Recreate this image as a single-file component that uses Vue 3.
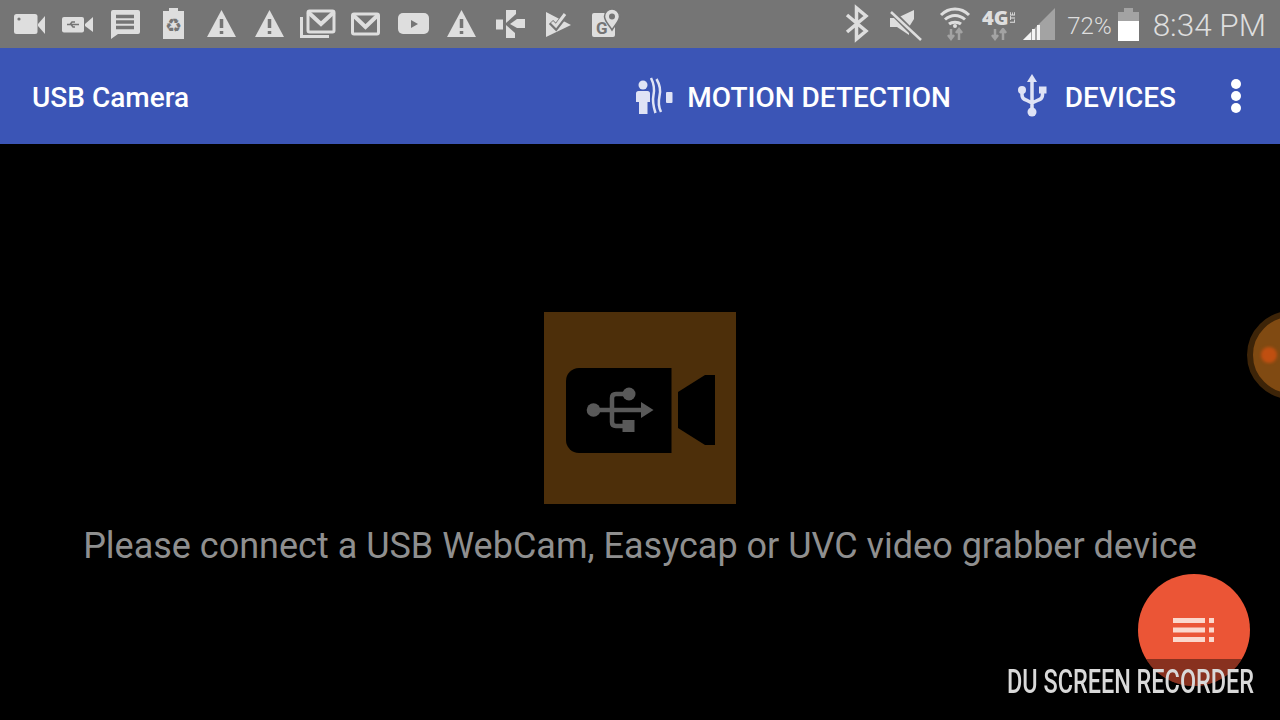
<script setup>
const warnAt = (x) => `${x - 14.5},37 ${x},10 ${x + 14.5},37`
</script>

<template>
  <div class="screen">
    <header class="status">
      <div class="tray">
        <svg class="slot" viewBox="6 0 48 48">
          <rect x="14" y="14" width="23.5" height="20" rx="2.5" />
          <circle cx="19" cy="19" r="1.6" class="cut" />
          <path d="M38 24 45 16V34L38 26Z" />
        </svg>
        <svg class="slot" viewBox="54 0 48 48">
          <rect x="62" y="17" width="22" height="15.5" rx="2" />
          <path d="M85 24 93 17V32L85 26Z" />
          <path class="line thin" d="M67 24.5H79M70 24.5 72 22H75M71 24.5 73 27H75" />
        </svg>
        <svg class="slot" viewBox="102 0 48 48">
          <path d="M113 10H138a2 2 0 0 1 2 2V32a2 2 0 0 1-2 2H118L111 39V12a2 2 0 0 1 2-2Z" />
          <path class="line bold" d="M116 16.5H134M116 22H134M116 27.500H134" />
        </svg>
        <svg class="slot" viewBox="150 0 48 48">
          <path d="M169 8H178V11H184V39H163V11H169Z" />
          <text class="recycle" x="173.500" y="32" text-anchor="middle">♻</text>
        </svg>
        <svg class="slot" viewBox="198 0 48 48">
          <polygon :points="warnAt(221.500)" />
          <path class="line bold" d="M221.500 19V28M221.500 31V34" />
        </svg>
        <svg class="slot" viewBox="246 0 48 48">
          <polygon :points="warnAt(269.500)" />
          <path class="line bold" d="M269.500 19V28M269.500 31V34" />
        </svg>
        <svg class="slot" viewBox="294 0 48 48">
          <path class="stroke" d="M301.500 17V36.500H329" />
          <rect class="stroke" x="308" y="11" width="26" height="21" rx="1.500" />
          <path class="stroke wide" d="M308 12 321 24 334 12" />
        </svg>
        <svg class="slot" viewBox="342 0 48 48">
          <rect class="stroke" x="352.500" y="14" width="26" height="20" rx="1.500" />
          <path class="stroke wide" d="M353 15 365.500 27 378 15" />
        </svg>
        <svg class="slot" viewBox="390 0 48 48">
          <rect x="398" y="13" width="31" height="21" rx="5" />
          <polygon class="cut" points="411,20 418,24 411,28" />
        </svg>
        <svg class="slot" viewBox="438 0 48 48">
          <polygon :points="warnAt(461.500)" />
          <path class="line bold" d="M461.500 19V28M461.500 31V34" />
        </svg>
        <svg class="slot" viewBox="486 0 48 48">
          <rect x="496" y="19.500" width="7" height="10" />
          <polygon points="506,10 516,10 516,14 506,23" />
          <polygon points="510,24 517,19 525,19 525,28 517,28" />
          <polygon points="506,25 515,33 515,38 506,38" />
        </svg>
        <svg class="slot" viewBox="534 0 48 48">
          <polygon points="546,12 571,25 546,37" />
          <path class="line check-cut" d="M551 22 556 27 566 14" />
          <path class="stroke" d="M552 22 556 26 565 14" />
        </svg>
        <svg class="slot" viewBox="582 0 48 48">
          <rect x="592" y="13" width="23" height="24" rx="2" />
          <text class="maps-g" x="596" y="34">G</text>
          <path class="pin" d="M612 9a7.500 7.500 0 0 1 7.500 7.500C619.500 21 615 25 612 30 609 25 604.500 21 604.500 16.500A7.500 7.500 0 0 1 612 9Z" />
          <circle class="cut" cx="612" cy="16.500" r="3" />
        </svg>
      </div>
      <div class="tray">
        <svg class="slot" viewBox="834 0 48 48">
          <path class="stroke blue" d="M848 15 867 31 857.500 39V8L867 16 848 32" />
        </svg>
        <svg class="slot" viewBox="882 0 48 48">
          <path d="M891 18H898L915 10V19L910 27V35L898 27H891Z" />
          <path class="mute-cut" d="M890 9 921 40" />
          <path class="mute" d="M892 12 922 40" />
        </svg>
        <svg class="slot" viewBox="930 0 48 48">
          <path class="stroke arc" d="M942 15C950 7 962 7 970 15M946 19.500C952 14 960 14 966 19.500M950 24C953 21.500 959 21.500 962 24" />
          <circle cx="956" cy="26" r="2" />
          <path class="dim arrows" d="M952 29V38M949 35 952 39 955 35M960 40V30M957 33 960 29 963 33" />
        </svg>
        <div class="net">
          <span class="net-label">4G<small>LTE</small></span>
          <svg class="arrows-svg" viewBox="990 28 20 14">
            <path class="dim arrows" d="M996 29V38M993 35 996 39 999 35M1004 40V30M1001 33 1004 29 1007 33" />
          </svg>
        </div>
        <svg class="signal" viewBox="1022 0 38 48">
          <polygon class="dim-fill" points="1024,40 1056,8 1056,40" />
          <polygon class="bright" points="1024,40 1032,32 1032,40" />
          <rect class="bright" x="1033" y="29" width="3" height="11" />
          <rect class="bright" x="1038" y="25" width="3" height="15" />
        </svg>
        <span class="percent">72%</span>
        <div class="battery"><i class="cap"></i><i class="used"></i><i class="charge"></i></div>
        <span class="clock">8:34 PM</span>
      </div>
    </header>

    <nav class="appbar">
      <span class="title">USB Camera</span>
      <div class="actions">
        <button class="action motion">
          <svg class="action-icon" viewBox="631 72 48 48">
            <circle cx="644" cy="85" r="4.500" />
            <path d="M639.500 91H648.500a2.500 2.500 0 0 1 2.500 2.500V102H648.500V114H640V102H637V93.500a2.500 2.500 0 0 1 2.500-2.500Z" />
            <path class="wave" d="M652 78C655 84 656 88 654.500 95 653 102 654.500 107 656.500 113M657.500 79C661 85 662 90 660.500 96 659 103 660 108 662 112" />
            <rect x="667" y="92" width="6.500" height="11" rx="1" />
          </svg>
          <span class="label">MOTION DETECTION</span>
        </button>
        <button class="action devices">
          <svg class="action-icon" viewBox="1008 72 48 48">
            <polygon points="1032,74 1037,82 1027,82" />
            <circle cx="1032" cy="112" r="4.500" />
            <circle cx="1022" cy="90" r="4" />
            <rect x="1039" y="86.500" width="7.500" height="7" />
            <path class="usb" d="M1032 80V110M1022 92V95Q1022 99 1026 100L1032 103M1042.500 92V95Q1042.500 99 1038.500 100L1032 103" />
          </svg>
          <span class="label">DEVICES</span>
        </button>
        <button class="menu" aria-label="More options"><i></i><i></i><i></i></button>
      </div>
    </nav>

    <main class="stage">
      <svg class="placeholder" viewBox="544 312 192 192">
        <rect class="tile" x="544" y="312" width="192" height="192" />
        <path class="cam" d="M579 368H671.500V453H579A13 13 0 0 1 566 440V381A13 13 0 0 1 579 368Z" />
        <path class="cam" d="M678 392 705 375H715V445H705L678 428Z" />
        <circle class="glyph" cx="593.500" cy="410" r="6.800" />
        <circle class="glyph" cx="629" cy="394" r="6.500" />
        <rect class="glyph" x="622.500" y="420" width="12" height="12" />
        <polygon class="glyph" points="641,402 653.500,410 641,418" />
        <path class="glyph-line" d="M594 410H645M625 394H616Q612 394 612 398V422Q612 426 616 426H626" />
      </svg>
      <p class="hint">Please connect a USB WebCam, Easycap or UVC video grabber device</p>
    </main>

    <div class="float-ball"><i></i></div>

    <div class="fab">
      <svg class="fab-icon" viewBox="1173 618 41 24">
        <path d="M1173 618H1205V623H1173ZM1173 627.500H1205V632.500H1173ZM1173 637H1205V642H1173ZM1209 618H1214V623H1209ZM1209 627.500H1214V632.500H1209ZM1209 637H1214V642H1209Z" />
      </svg>
      <div class="fab-shade"></div>
    </div>
    <div class="watermark">DU SCREEN RECORDER</div>
  </div>
</template>

<style>
html, body { margin: 0; background: #000; }
</style>

<style scoped>
.screen {
  position: relative;
  width: 1280px;
  height: 720px;
  overflow: hidden;
  background: #000;
  font-family: Roboto, "Liberation Sans", sans-serif;
}

.status {
  height: 48px;
  display: flex;
  justify-content: space-between;
  padding: 0 14px 0 6px;
  box-sizing: border-box;
  background: #757575;
}
.tray { display: flex; align-items: center; }
.slot { width: 48px; height: 48px; display: block; }
svg { fill: #dedede; }
.cut { fill: #757575; }
.line { fill: none; stroke: #757575; }
.thin { stroke-width: 1.5; }
.bold { stroke-width: 3.500; }
.recycle { fill: #757575; font: 19px "DejaVu Sans", sans-serif; }
.check-cut { stroke-width: 6; }
.stroke { fill: none; stroke: #dedede; stroke-width: 3; }
.wide { stroke-width: 4; }
.blue { stroke-width: 3.500; }
.arc { stroke-width: 3; }
.maps-g { fill: #757575; font: 700 17px Roboto, sans-serif; }
.pin { stroke: #757575; stroke-width: 1.500; }
.mute-cut { fill: none; stroke: #757575; stroke-width: 6; }
.mute { fill: none; stroke: #dedede; stroke-width: 2.500; }
.dim { fill: none; stroke: #a3a3a3; }
.arrows { stroke-width: 2.500; }
.net { width: 44px; height: 48px; display: flex; flex-direction: column; align-items: center; color: #dedede; }
.net-label { margin-top: 7px; font: 800 20px/21px "Open Sans", sans-serif; display: flex; align-items: center; }
.net-label small { font: 700 7px/7px Roboto, sans-serif; writing-mode: vertical-rl; transform: rotate(180deg); margin-left: 1px; }
.arrows-svg { width: 20px; height: 14px; display: block; }
.signal { width: 38px; height: 48px; display: block; }
.dim-fill { fill: #a3a3a3; }
.bright { fill: #f4f4f4; }
.percent { margin-left: 8px; padding-top: 4px; color: #dedede; font-size: 24px; font-weight: 300; line-height: 44px; }
.battery { width: 21px; height: 33px; margin: 0 14px 0 6px; display: flex; flex-direction: column; align-items: center; }
.battery i { display: block; }
.cap { width: 9px; height: 4px; background: #a3a3a3; }
.used { width: 21px; height: 9px; background: #a3a3a3; }
.charge { width: 21px; height: 20px; background: #fff; }
.clock { padding-top: 4px; color: #dedede; font-size: 31.500px; font-weight: 300; line-height: 44px; }

.appbar {
  height: 96px;
  display: flex;
  align-items: center;
  justify-content: space-between;
  padding: 0 20px 0 32px;
  background: #3b55b6;
  color: #fff;
}
.title { padding-top: 2px; font-size: 28px; font-weight: 500; }
.actions { display: flex; align-items: center; }
.action {
  display: flex;
  align-items: center;
  height: 48px;
  padding: 0;
  border: 0;
  background: none;
  color: #fff;
  font: 500 28px Roboto, sans-serif;
}
.label { padding-top: 2px; }
.action-icon { width: 48px; height: 48px; display: block; fill: #dfe3f5; }
.motion .action-icon { margin-right: 9px; }
.devices { margin-left: 57px; }
.devices .action-icon { margin-right: 9px; }
.wave { fill: none; stroke: #dfe3f5; stroke-width: 2.500; }
.usb { fill: none; stroke: #dfe3f5; stroke-width: 3.500; }
.menu {
  width: 48px;
  height: 48px;
  margin-left: 36px;
  padding: 0;
  border: 0;
  background: none;
  display: flex;
  flex-direction: column;
  align-items: center;
  justify-content: center;
  gap: 2px;
}
.menu i { width: 10px; height: 10px; border-radius: 50%; background: #fff; }

.stage {
  height: 576px;
  padding-top: 168px;
  box-sizing: border-box;
  display: flex;
  flex-direction: column;
  align-items: center;
}
.placeholder { width: 192px; height: 192px; display: block; flex: none; }
.tile { fill: #4d2f0a; }
.cam { fill: #000; }
.glyph { fill: #595959; }
.glyph-line { fill: none; stroke: #595959; stroke-width: 4.500; }
.hint {
  margin: 21px 0 0;
  color: #8f8f8f;
  font-size: 36px;
  line-height: 42px;
  white-space: nowrap;
}

.float-ball {
  position: absolute;
  left: 1247px;
  top: 311px;
  width: 88px;
  height: 88px;
  box-sizing: border-box;
  border: 6px solid #3d2408;
  border-radius: 50%;
  background: #804a12;
}
.float-ball i {
  position: absolute;
  left: 8px;
  top: 30px;
  width: 16px;
  height: 16px;
  border-radius: 50%;
  background: #c04f10;
  filter: blur(1.500px);
}

.fab {
  position: absolute;
  left: 1138px;
  top: 574px;
  width: 112px;
  height: 112px;
  border-radius: 50%;
  overflow: hidden;
  background: #eb5536;
}
.fab-icon { position: absolute; left: 35px; top: 44px; width: 41px; height: 24px; fill: #fbd8cd; }
.fab-shade { position: absolute; left: 0; right: 0; top: 85px; bottom: 0; background: rgba(0, 0, 0, 0.42); }

.watermark {
  position: absolute;
  left: 1007px;
  top: 663px;
  color: #d9d9d9;
  font: 500 33px/38px Roboto, sans-serif;
  white-space: nowrap;
  transform: scaleX(0.71);
  transform-origin: left center;
}
</style>
